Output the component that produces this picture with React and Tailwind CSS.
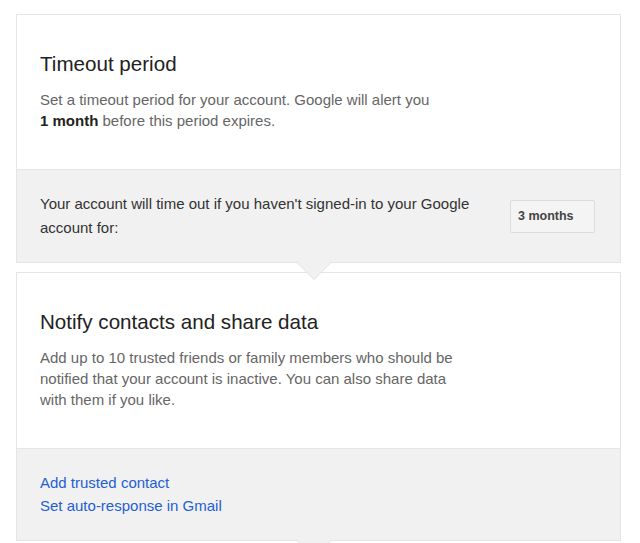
function Pointer() {
  return (
    <svg
      className="absolute left-[279px] top-full z-10 -mt-px"
      width="36"
      height="20"
      viewBox="0 0 36 20"
    >
      <path d="M0 0.5 L18 18.5 L36 0.5" fill="#f1f1f1" stroke="#e0e0e0" strokeWidth="1" />
    </svg>
  );
}

function Card({ title, children, footer }) {
  return (
    <div className="relative ml-[16px] w-[605px] border border-[#e5e5e5] bg-white">
      <div className="px-[23px] pb-[38px] pt-[37px]">
        <h2 className="text-[20.6px] leading-[24px] font-normal text-[#222]">{title}</h2>
        <p className="mt-[13px] text-[15px] leading-[21px] text-[#666]">{children}</p>
      </div>
      <div className="border-t border-[#e5e5e5] bg-[#f1f1f1]">{footer}</div>
      <Pointer />
    </div>
  );
}

export default function App() {
  return (
    <div className="min-h-[543px] overflow-hidden bg-white pt-[14px] font-['Liberation_Sans',Arial,sans-serif]">
      <Card
        title="Timeout period"
        footer={
          <div className="flex items-center justify-between py-[22px] pl-[23px] pr-[25px]">
            <p className="w-[450px] text-[15px] leading-[24px] text-[#333]">
              Your account will time out if you haven't signed-in to your Google
              <br />
              account for:
            </p>
            <button
              type="button"
              className="h-[33px] w-[85px] rounded-[2px] border border-[#dcdcdc] bg-[#f4f4f4] pl-[7px] text-left text-[12.5px] font-bold text-[#444]"
            >
              3 months
            </button>
          </div>
        }
      >
        Set a timeout period for your account. Google will alert you
        <br />
        <b className="font-bold text-[#222]">1 month</b> before this period expires.
      </Card>

      <div className="h-[9px]" />

      <Card
        title="Notify contacts and share data"
        footer={
          <div className="flex flex-col items-start pb-[23px] pl-[23px] pt-[22px] text-[15px] leading-[23px] text-[#1f5fd1]">
            <a href="#" className="hover:underline">
              Add trusted contact
            </a>
            <a href="#" className="hover:underline">
              Set auto-response in Gmail
            </a>
          </div>
        }
      >
        Add up to 10 trusted friends or family members who should be
        <br />
        notified that your account is inactive. You can also share data
        <br />
        with them if you like.
      </Card>
    </div>
  );
}
